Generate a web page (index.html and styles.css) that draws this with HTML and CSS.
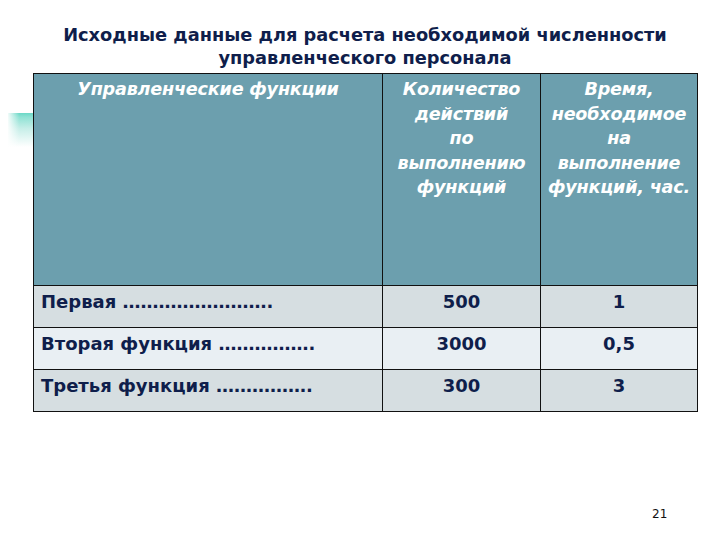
FILE: index.html
```html
<!DOCTYPE html>
<html lang="ru">
<head>
<meta charset="utf-8">
<link rel="stylesheet" href="styles.css">
</head>
<body>
<div class="slide">
  <div class="accent"></div>
  <h1 class="title">Исходные данные для расчета необходимой численности<br>управленческого персонала</h1>
  <table class="data">
    <thead>
      <tr>
        <th class="c1">Управленческие функции</th>
        <th class="c2">Количество<br>действий<br>по<br>выполнению<br>функций</th>
        <th class="c3">Время,<br>необходимое<br>на<br>выполнение<br>функций, час.</th>
      </tr>
    </thead>
    <tbody>
      <tr class="odd"><td class="name">Первая …………………….</td><td class="num">500</td><td class="num">1</td></tr>
      <tr class="even"><td class="name">Вторая функция …………….</td><td class="num">3000</td><td class="num">0,5</td></tr>
      <tr class="odd"><td class="name">Третья функция …………….</td><td class="num">300</td><td class="num">3</td></tr>
    </tbody>
  </table>
  <div class="page">21</div>
</div>
</body>
</html>
```
FILE: styles.css
```css
html, body {
  margin: 0;
  padding: 0;
  background: #ffffff;
}
.slide {
  position: relative;
  width: 720px;
  height: 540px;
  overflow: hidden;
  font-family: "DejaVu Sans", Verdana, sans-serif;
}
.accent {
  position: absolute;
  left: 8px;
  top: 113px;
  width: 25px;
  height: 34px;
  background:
    linear-gradient(90deg, rgba(255,255,255,0.9) 0%, rgba(255,255,255,0) 45%),
    linear-gradient(180deg, #6ad8c6 0%, #8fe2d4 12%, #c6eee8 45%, #ffffff 100%);
}
.title {
  margin: 0;
  padding: 23px 0 0 10px;
  text-align: center;
  font-size: 17.8px;
  line-height: 23px;
  font-weight: bold;
  color: #0f1e4b;
}
.data {
  margin: 4px 0 0 33px;
  width: 665px;
  border-collapse: collapse;
  table-layout: fixed;
}
.data th, .data td {
  border: 1px solid #111;
  padding: 0;
}
.data th {
  background: #6c9fae;
  color: #ffffff;
  font-style: italic;
  font-weight: bold;
  font-size: 17.6px;
  line-height: 24.5px;
  vertical-align: top;
  text-align: center;
  height: 208px;
  padding-top: 3px;
  letter-spacing: -0.2px;
}
.data .c1 { width: 348px; }
.data .c2 { width: 157px; }
.data td {
  color: #0f1e4b;
  font-weight: bold;
  font-size: 18px;
  line-height: 22px;
  height: 36px;
  vertical-align: top;
  padding-top: 5px;
}
.data td.name { padding-left: 7px; }
.data td.num { text-align: center; }
.data tr.odd td { background: #d6dee1; }
.data tr.even td { background: #e9eff3; }
.page {
  position: absolute;
  left: 652px;
  top: 507px;
  font-size: 12px;
  color: #111;
}
```
